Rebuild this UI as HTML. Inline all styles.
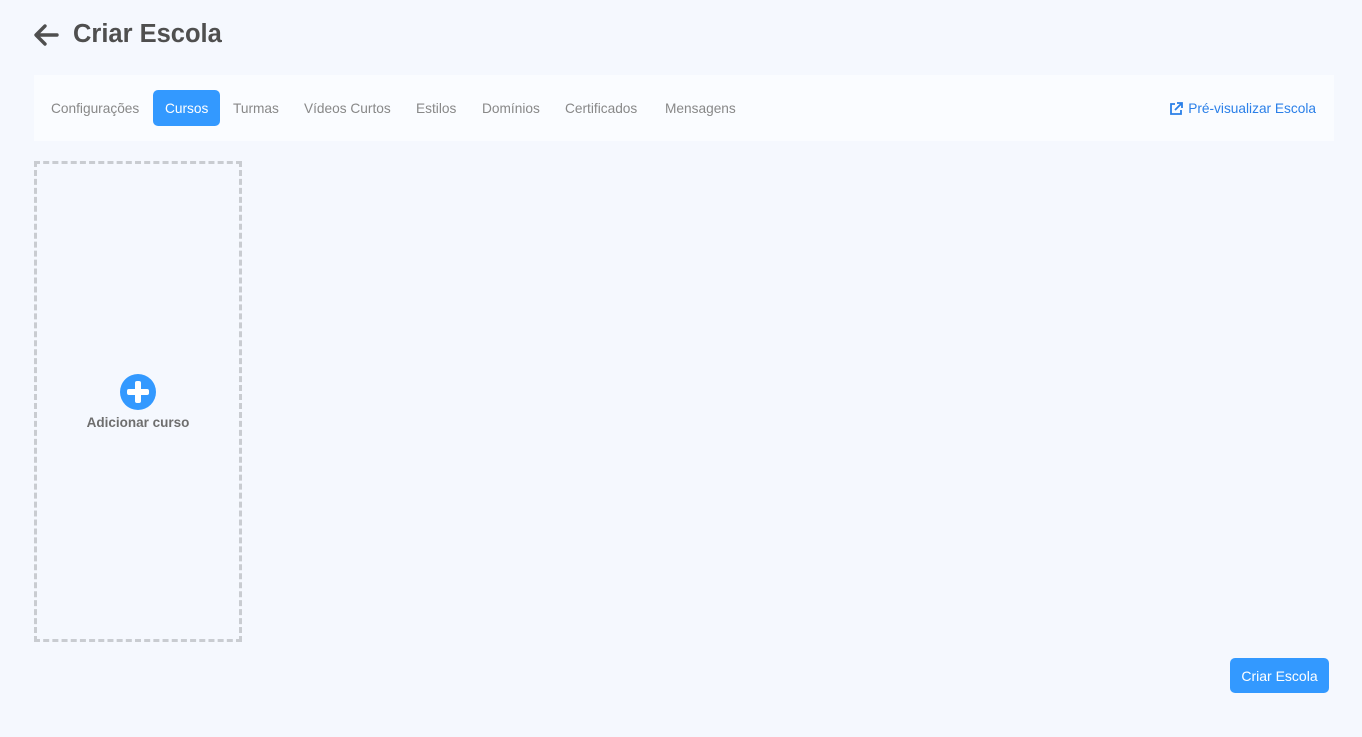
<!DOCTYPE html>
<html><head><meta charset="utf-8"><style>
body{margin:0;background:#f5f8fe;font-family:"Liberation Sans",Roboto,sans-serif;width:1362px;height:737px;overflow:hidden;position:relative}
.title{position:absolute;left:32px;top:20px;display:flex;align-items:center;color:#4f4f4f;font-weight:bold;font-size:25.5px}
.nav{position:absolute;left:34px;top:75px;width:1300px;height:66px;background:#fafcff}
.tab{position:absolute;top:15px;height:36px;line-height:37px;font-size:13.7px;color:#888}
.tab.a{background:#3399ff;color:#fff;border-radius:5px;padding:0 12px}
.prev{position:absolute;right:18px;top:15px;line-height:37px;font-size:13.7px;color:#2a7fe8;display:flex;align-items:center;gap:5px}
.box{position:absolute;left:34px;top:161px;width:202px;height:475px;border:3px dashed #c9ccd1}
.plus{position:absolute;left:120px;top:374px;width:36px;height:36px;border-radius:50%;background:#3399ff}
.plus:before{content:"";position:absolute;left:15px;top:7px;width:6px;height:22px;background:#fff;border-radius:2px}
.plus:after{content:"";position:absolute;left:7px;top:15px;width:22px;height:6px;background:#fff;border-radius:2px}
.lbl{position:absolute;left:34px;width:208px;text-align:center;top:415px;font-size:13.5px;font-weight:bold;color:#6e6e6e}
.btn{position:absolute;left:1230px;top:658px;width:99px;height:35px;background:#3399ff;color:#fff;border-radius:5px;font-size:14px;text-align:center;line-height:36px}
</style></head><body>
<div class="title"><svg width="28" height="24" viewBox="0 0 28 24" style="margin-right:13px"><path d="M25 12H5M13 3L4 12l9 9" fill="none" stroke="#4f4f4f" stroke-width="3.4" stroke-linecap="round" stroke-linejoin="round"/></svg>Criar Escola</div>
<div class="nav">
<span class="tab" style="left:17px">Configurações</span>
<span class="tab a" style="left:119px">Cursos</span>
<span class="tab" style="left:199px">Turmas</span>
<span class="tab" style="left:270px">Vídeos Curtos</span>
<span class="tab" style="left:382px">Estilos</span>
<span class="tab" style="left:448px">Domínios</span>
<span class="tab" style="left:531px">Certificados</span>
<span class="tab" style="left:631px">Mensagens</span>
<span class="prev"><svg width="14" height="14" viewBox="0 0 14 14"><path d="M6 2H2v10h10V8M8 1h5v5M13 1L6 8" fill="none" stroke="#2a7fe8" stroke-width="1.8"/></svg>Pré-visualizar Escola</span>
</div>
<div class="box"></div>
<div class="plus"></div>
<div class="lbl">Adicionar curso</div>
<div class="btn">Criar Escola</div>
</body></html>
